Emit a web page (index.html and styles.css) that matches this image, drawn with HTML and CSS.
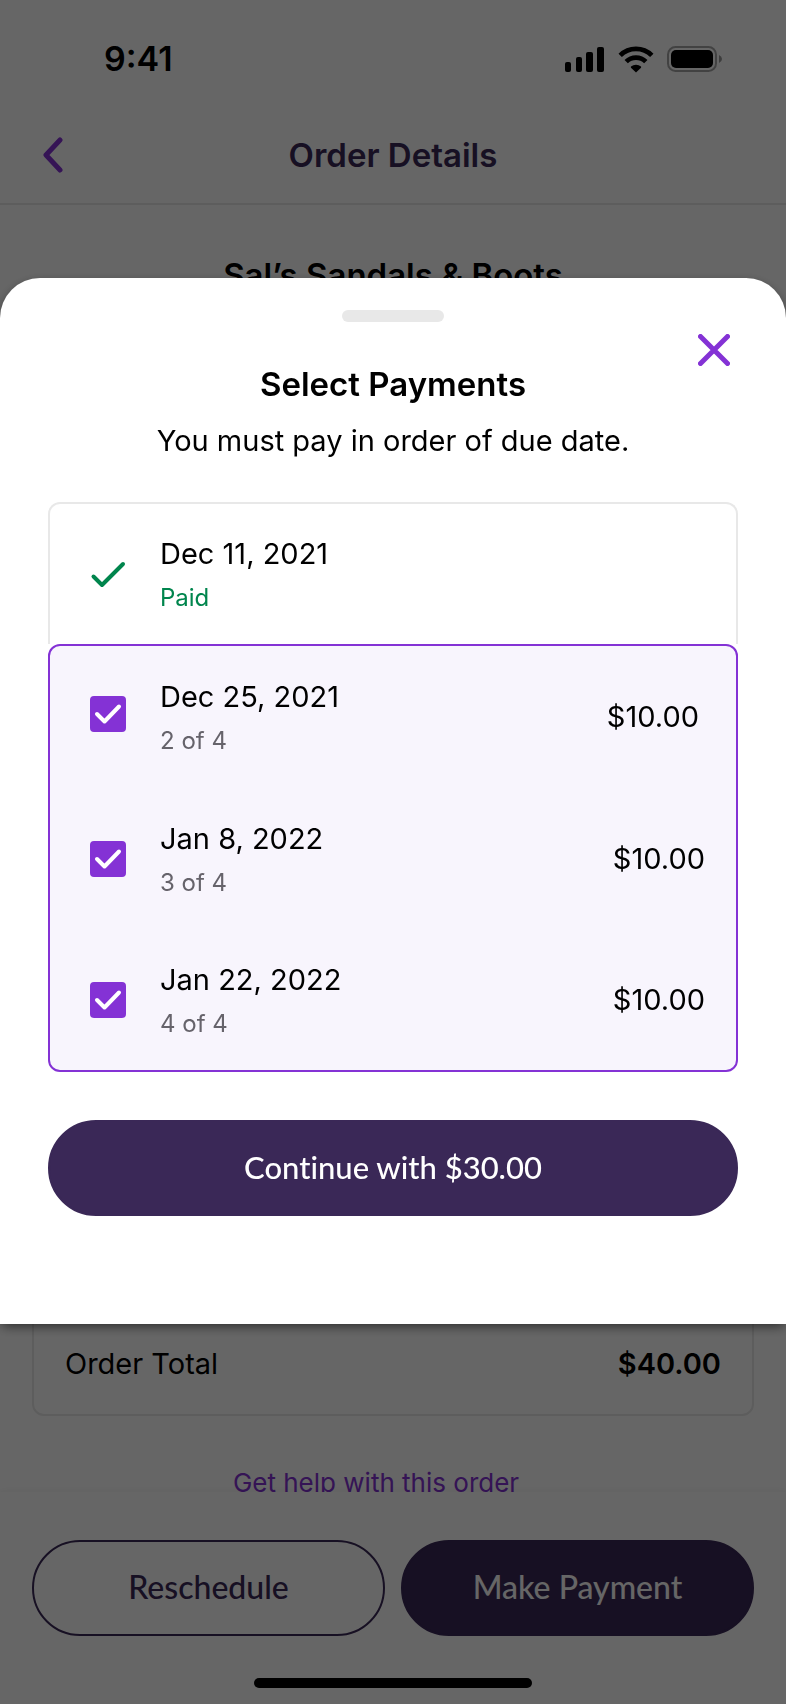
FILE: index.html
```html
<!DOCTYPE html>
<html lang="en">
<head>
<meta charset="utf-8">
<meta name="viewport" content="width=device-width, initial-scale=1">
<title>Order Details</title>
<link rel="stylesheet" href="styles.css">
</head>
<body>
<div class="app">
  <div class="status-bar">
    <span class="clock">9:41</span>
    <svg class="status-icons" width="158" height="28" viewBox="0 0 158 28" aria-hidden="true">
      <rect x="0" y="17" width="6" height="10" rx="2"/>
      <rect x="11" y="12" width="6" height="15" rx="2"/>
      <rect x="21" y="7" width="7" height="20" rx="2"/>
      <rect x="32" y="2" width="7" height="25" rx="2"/>
      <g fill="none" stroke="#000" stroke-width="4.8">
        <path d="M55.2 10.4a22.5 22.5 0 0 1 31.6 0"/>
        <path d="M61.2 16.6a14 14 0 0 1 19.6 0"/>
      </g>
      <path d="M66 21.6a7.6 7.6 0 0 1 10 0q.4.6 0 1.1L71 27.5l-5-4.8q-.4-.6 0-1.1z"/>
      <rect x="103" y="2" width="48" height="24" rx="7.5" fill="none" stroke="#000" stroke-opacity=".35" stroke-width="2"/>
      <rect x="106" y="5" width="42" height="18" rx="5"/>
      <path d="M154 10v8q3-1.300 3-4t-3-4z" fill-opacity=".4"/>
    </svg>
  </div>
  <header class="nav">
    <button class="icon-button back" type="button" aria-label="Back">
      <svg width="20" height="36" viewBox="0 0 20 36" aria-hidden="true"><path d="M17 3 3 18l14 15"/></svg>
    </button>
    <h1 class="heading nav-title">Order Details</h1>
  </header>
  <main class="order">
    <h2 class="heading merchant">Sal’s Sandals &amp; Boots</h2>
    <section class="summary">
      <div class="total"><span>Order Total</span><strong>$40.00</strong></div>
    </section>
    <a class="help" href="#">Get help with this order</a>
  </main>
  <footer class="actions">
    <div class="action-row">
      <button class="pill outline" type="button">Reschedule</button>
      <button class="pill" type="button">Make Payment</button>
    </div>
    <div class="home-indicator"></div>
  </footer>
</div>

<div class="backdrop">
  <form class="sheet" role="dialog" aria-labelledby="sheet-title">
    <div class="handle"></div>
    <button class="icon-button close" type="button" aria-label="Close">
      <svg width="32" height="32" viewBox="0 0 32 32" aria-hidden="true"><path d="m2.500 2.500 27 27m0-27-27 27"/></svg>
    </button>
    <h2 class="heading sheet-title" id="sheet-title">Select Payments</h2>
    <p class="hint">You must pay in order of due date.</p>
    <div class="payments">
      <div class="payment paid">
        <svg class="paid-icon" width="36" height="28" viewBox="0 0 36 28" aria-hidden="true"><path d="m3.500 16.500 8.500 8.500L33 4"/></svg>
        <div class="details"><span class="date">Dec 11, 2021</span><span class="note">Paid</span></div>
      </div>
      <div class="due">
        <label class="payment current">
          <span class="check">
            <input type="checkbox" checked>
            <svg width="36" height="36" viewBox="0 0 36 36" aria-hidden="true"><path d="m7 18 7.500 7.500L29 10.500"/></svg>
          </span>
          <span class="details"><span class="date">Dec 25, 2021</span><span class="note">2 of 4</span></span>
          <span class="amount">$10.00</span>
        </label>
        <label class="payment">
          <span class="check">
            <input type="checkbox" checked>
            <svg width="36" height="36" viewBox="0 0 36 36" aria-hidden="true"><path d="m7 18 7.500 7.500L29 10.500"/></svg>
          </span>
          <span class="details"><span class="date">Jan 8, 2022</span><span class="note">3 of 4</span></span>
          <span class="amount">$10.00</span>
        </label>
        <label class="payment last">
          <span class="check">
            <input type="checkbox" checked>
            <svg width="36" height="36" viewBox="0 0 36 36" aria-hidden="true"><path d="m7 18 7.500 7.500L29 10.500"/></svg>
          </span>
          <span class="details"><span class="date">Jan 22, 2022</span><span class="note">4 of 4</span></span>
          <span class="amount">$10.00</span>
        </label>
      </div>
    </div>
    <button class="pill" type="submit">Continue with $30.00</button>
  </form>
</div>
</body>
</html>
```
FILE: styles.css
```css
:root {
  --purple: #8432d5;
  --ink: #3a2857;
  --line: #e8e8e8;
  --green: #00854d;
}

* {
  box-sizing: border-box;
}

body {
  margin: 0;
  background: #fff;
  color: #000;
  font: 29px/44px Inter, sans-serif;
}

button {
  font: inherit;
  cursor: pointer;
}

.heading {
  margin: 0;
  font-size: 33px;
  font-weight: 600;
  text-align: center;
}

.icon-button {
  display: grid;
  padding: 0;
  border: 0;
  background: none;
}

.icon-button path {
  fill: none;
  stroke: var(--purple);
  stroke-width: 5;
  stroke-linecap: round;
  stroke-linejoin: round;
}

/* Order screen */
.app {
  display: flex;
  flex-direction: column;
  height: 100vh;
}

.status-bar {
  display: flex;
  align-items: center;
  justify-content: space-between;
  padding: 37px 63px 0 104px;
}

.clock {
  font-size: 34px;
  font-weight: 600;
}

.nav {
  display: grid;
  grid-template-columns: 60px 1fr 60px;
  align-items: center;
  margin-top: 22px;
  padding: 30px 43px 26px;
  border-bottom: 2px solid var(--line);
}

.nav-title {
  color: var(--ink);
}

.order {
  display: flex;
  flex: 1;
  flex-direction: column;
  min-height: 0;
  margin-bottom: -13px;
  padding: 48px 32px 0;
}

.summary {
  display: flex;
  flex: 1;
  flex-direction: column;
  justify-content: flex-end;
  margin-top: 32px;
  padding: 28px 31px;
  border: 2px solid var(--line);
  border-radius: 12px;
}

.total {
  display: flex;
  justify-content: space-between;
}

.total strong {
  font-weight: 600;
}

.help {
  align-self: center;
  margin-top: 45px;
  margin-right: 34px;
  color: var(--purple);
  font-size: 26px;
  text-decoration: none;
}

.actions {
  z-index: 1;
  padding: 48px 32px 16px;
  background: #fff;
  box-shadow: 0 0 8px rgba(0, 0, 0, .06);
}

.action-row {
  display: grid;
  grid-template-columns: 1fr 1fr;
  gap: 16px;
}

.home-indicator {
  width: 278px;
  height: 10px;
  margin: 42px auto 0;
  border-radius: 5px;
  background: #000;
}

.pill {
  height: 96px;
  padding-bottom: 4px;
  border: 2px solid var(--ink);
  border-radius: 48px;
  background: var(--ink);
  color: #fff;
  font-family: Lato, sans-serif;
  font-size: 31px;
  font-weight: 500;
  font-variant-ligatures: none;
}

.action-row .pill {
  font-size: 32px;
}

.pill.outline {
  background: none;
  color: var(--ink);
}

/* Payment sheet */
.backdrop {
  position: fixed;
  inset: 0;
  z-index: 2;
  padding-top: 278px;
  background: rgba(0, 0, 0, .6);
}

.sheet {
  position: relative;
  display: flex;
  flex-direction: column;
  padding: 32px 48px 108px;
  border-radius: 40px 40px 0 0;
  background: #fff;
  box-shadow: 0 4px 12px -2px rgba(0, 0, 0, .6);
}

.handle {
  align-self: center;
  width: 102px;
  height: 12px;
  border-radius: 6px;
  background: var(--line);
}

.close {
  position: absolute;
  top: 56px;
  right: 56px;
}

.sheet-title {
  margin-top: 40px;
}

.hint {
  margin: 13px 0 39px;
  text-align: center;
}

.payment {
  display: flex;
  align-items: center;
  height: 142px;
  padding: 0 31px 0 40px;
}

.payment.last {
  height: 140px;
}

.paid {
  border: 2px solid var(--line);
  border-bottom: 0;
  border-radius: 12px 12px 0 0;
}

.paid-icon {
  fill: none;
  stroke: var(--green);
  stroke-width: 4;
  stroke-linecap: round;
  stroke-linejoin: round;
}

.due {
  border: 2px solid var(--purple);
  border-radius: 12px;
  background: #f8f5fd;
}

.payment.current {
  padding-right: 37px;
}

.current .check {
  margin-bottom: 6px;
}

.check {
  display: grid;
}

.check input,
.check svg {
  grid-area: 1 / 1;
}

.check input {
  appearance: none;
  width: 36px;
  height: 36px;
  margin: 0;
  border: 2px solid var(--purple);
  border-radius: 4px;
}

.check input:checked {
  background: var(--purple);
}

.check svg {
  fill: none;
  stroke: #fff;
  stroke-width: 4;
  stroke-linecap: round;
  stroke-linejoin: round;
  pointer-events: none;
}

.details {
  display: flex;
  flex: 1;
  flex-direction: column;
  margin-left: 34px;
  padding-top: 3px;
}

.note {
  color: #66636b;
  font-size: 24px;
}

.paid .note {
  color: var(--green);
}

.sheet > .pill {
  margin-top: 48px;
}
```
